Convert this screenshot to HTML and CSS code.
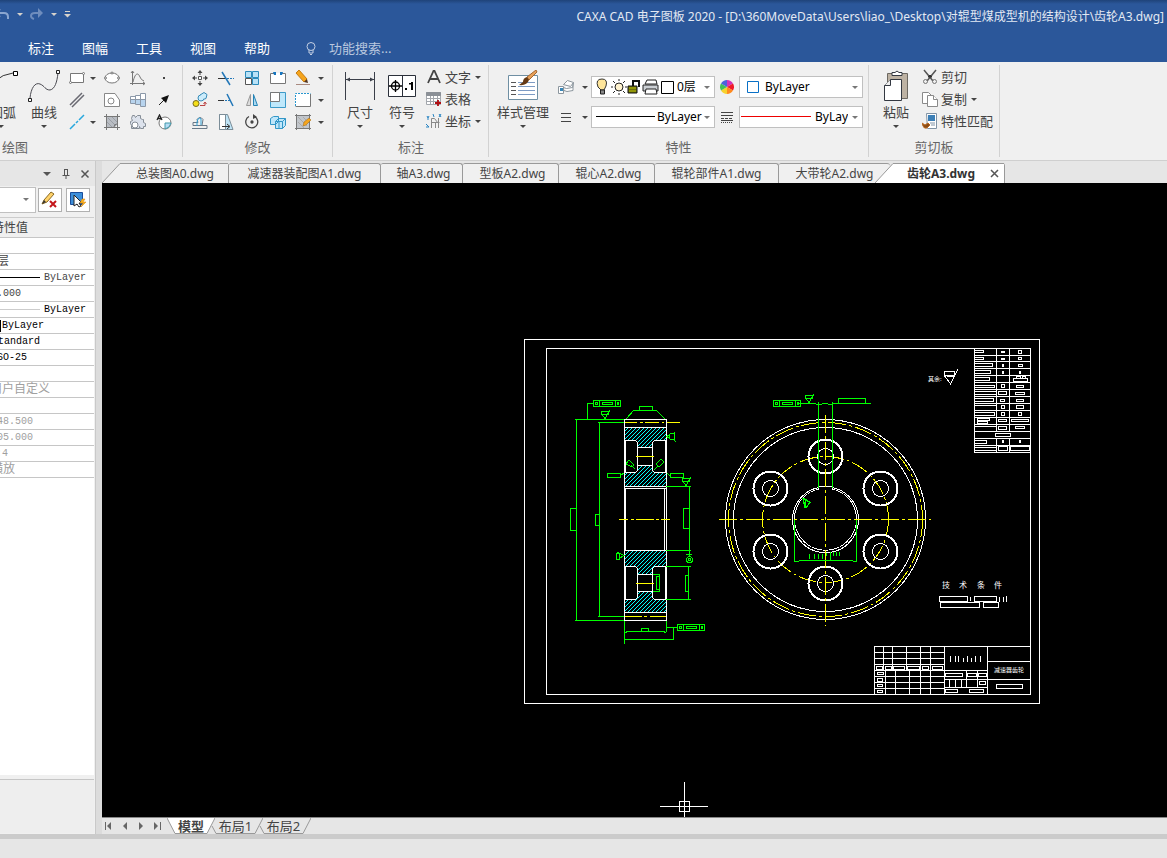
FILE: index.html
```html
<!DOCTYPE html>
<html lang="zh-CN">
<head>
<meta charset="utf-8">
<title>CAXA CAD 电子图板 2020</title>
<link rel="stylesheet" href="styles.css">
</head>
<body>
<div class="app">
<header class="header">
  <div class="titlebar">
    <div class="quick">
      <button class="quick-btn" aria-label="撤销"><svg width="10" height="12"><path d="M-3 5H4Q8 5 8 9V11" fill="none" stroke="#8ba6d0" stroke-width="2"/><path d="M0 1L-4 5L0 9" fill="none" stroke="#8ba6d0" stroke-width="2"/></svg></button>
      <button class="quick-btn" aria-label="撤销列表"><i class="caret caret--light"></i></button>
      <button class="quick-btn" aria-label="重做"><svg width="14" height="12"><path d="M12 5H5Q1 5 1 8Q1 10 4 11" fill="none" stroke="#6f8dbd" stroke-width="2"/><path d="M8 0V10L13 5Z" fill="#6f8dbd"/></svg></button>
      <button class="quick-btn" aria-label="重做列表"><i class="caret caret--light"></i></button>
      <button class="quick-btn" aria-label="自定义"><svg width="7" height="8"><path d="M1 1.500H6" stroke="#d6d2cc"/><path d="M0 4H7L3.500 7.500Z" fill="#d6d2cc"/></svg></button>
    </div>
    <h1 class="title">CAXA CAD 电子图板 2020 - [D:\360MoveData\Users\liao_\Desktop\对辊型煤成型机的结构设计\齿轮A3.dwg]</h1>
  </div>
  <nav class="menu">
    <button>标注</button><button>图幅</button><button>工具</button><button>视图</button><button>帮助</button>
    <label class="search"><svg width="10" height="13" fill="none" stroke="#c3cfe3"><circle cx="5" cy="4.500" r="4"/><path d="M3 8V11H7V8M4 12.500H6"/></svg><input type="text" placeholder="功能搜索..." aria-label="功能搜索"></label>
  </nav>
</header>

<div class="ribbon">
  <section class="group group--draw">
    <div class="group-body">
      <button class="big big--arc"><svg width="32" height="32" viewBox="0 0 32 32" fill="none" stroke="#333"><path d="M2 27Q5 6 27 3"/><path d="M27.500 1.500h4v4h-4z" stroke="#000" fill="#fff"/></svg><span>圆弧</span><i class="caret"></i></button>
      <button class="big big--curve"><svg width="32" height="32" viewBox="0 0 32 32" fill="none" stroke="#4b4b52"><path d="M2 28C3 18 7 12 12 14C17 16 17 20 22 20C27 19 29 12 30 3"/><path d="M28.500 0.500h3v3h-3zM0.500 28.500h3v3h-3z" fill="#fff" stroke="#222"/></svg><span>曲线</span><i class="caret"></i></button>
      <div class="grid grid--draw">
        <div class="split"><button aria-label="矩形"><svg width="16" height="16" fill="#fff" stroke="#777"><path d="M1.500 3.500h13v9h-13z"/><circle cx="1.500" cy="12.500" r="1"/><circle cx="14.500" cy="3.500" r="1"/></svg></button><button class="drop" aria-label="矩形选项"><i class="caret"></i></button></div>
        <button aria-label="椭圆"><svg width="16" height="16" fill="#fff" stroke="#777"><ellipse cx="8" cy="8" rx="7" ry="5"/><circle cx="8" cy="3" r="1"/><circle cx="1.500" cy="8" r="1"/><circle cx="14.500" cy="8" r="1"/></svg></button>
        <button aria-label="公式曲线"><svg width="16" height="16" fill="none" stroke="#777"><path d="M2.500 1V15M0 13.500H15M1 3L2.500 1L4 3M13 12L15 13.500L13 15M3 12C5 3 8 2 10 7Q11 10 14 11"/></svg></button>
        <button aria-label="点"><svg width="16" height="16"><path d="M7 7h2v2H7z" fill="#444"/></svg></button>
        <button class="solo" aria-label="平行线"><svg width="16" height="16" stroke="#6a6a72" stroke-width="1.500"><path d="M1 13L13 1M3 15L15 3"/></svg></button>
        <button aria-label="孔"><svg width="16" height="16" fill="#fff" stroke="#888"><path d="M.5 1.500H11L15.500 8V14.500H.5z"/><circle cx="7" cy="9" r="3"/></svg></button>
        <button aria-label="轴"><svg width="16" height="16" fill="#fff" stroke="#8b98a8"><path d="M.5 4.500H5.500V3.500H10.500V1.500H15.500V14.500H10.500V12.500H5.500V11.500H.5z"/><path d="M1 8H15V14H11V12H6V11H1z" fill="#b8d4ee" stroke="none"/><path d="M5.500 4V12M10.500 2V14M0 7.500H16"/></svg></button>
        <button aria-label="箭头"><svg width="16" height="16"><path d="M3 13L8 8" stroke="#222"/><path d="M13 3L10 11L5 6Z" fill="#111"/></svg></button>
        <div class="split"><button aria-label="中心线"><svg width="16" height="16" stroke="#28a7dd" stroke-width="1.500"><path d="M1 15L6 10M7 9L9 7M10 6L15 1"/></svg></button><button class="drop" aria-label="中心线选项"><i class="caret"></i></button></div>
        <button aria-label="填充"><svg width="16" height="16"><path d="M2 2h12v8l-4 4H2z" fill="#b9bdc3"/><path d="M4 4l8 8M8 3l5 5M3 8l5 5" stroke="#9a9ea5"/><path d="M0 2.500H16M2.500 0V16M13.500 0V16M0 13.500H16M13 10q-3 0-3 3" fill="none" stroke="#777"/></svg></button>
        <button aria-label="齿轮"><svg width="16" height="16" fill="#dce2ec" stroke="#858d96"><path d="M2.500 1.500h2l1 2 2-2h3v3l2 1h1v3l2 1v3h-2v2h-3l-1-2v2h-8v-3l-1-2v-2l2-1-1-2z"/><circle cx="5" cy="11" r="3" fill="#fff"/></svg></button>
        <button aria-label="局部放大"><svg width="16" height="16" fill="#fff" stroke="#777"><circle cx="9" cy="9" r="6"/><path d="M9 9h6q-1 5-6 6z" fill="#b5dcf5" stroke="#49a"/><path d="M1 6L3.500 1L6 6M2 4.500h3" fill="none" stroke="#222" stroke-width="1.300"/></svg></button>
      </div>
    </div>
    <h2 class="group-label">绘图</h2>
  </section>

  <section class="group group--modify">
    <div class="group-body">
      <div class="grid grid--modify">
        <button aria-label="平移"><svg width="16" height="16"><path d="M6.500 6.500h3v3h-3z" fill="#fff" stroke="#555"/><path d="M8 0l2.500 3h-2v2h-1V3h-2zM8 16l2.500-3h-2v-2h-1v2h-2zM0 8l3-2.500v2h2v1H3v2zM16 8l-3-2.500v2h-2v1h2v2z" fill="#444"/></svg></button>
        <button aria-label="裁剪"><svg width="16" height="16" fill="none" stroke="#2277b8"><path d="M0 8.500H8" stroke="#333"/><path d="M9 8.500H16" stroke-dasharray="2 1"/><path d="M4 2L12 15" stroke-width="1.500"/></svg></button>
        <button aria-label="阵列"><svg width="16" height="16" fill="#b9e2f7" stroke="#2b8bbb"><path d="M1.500 1.500h6v6h-6zM8.500 1.500h6v6h-6zM8.500 8.500h6v6h-6z"/><path d="M1.500 8.500h6v6h-6z" fill="#fff" stroke="#555"/></svg></button>
        <button aria-label="打断"><svg width="16" height="16"><path d="M0 3h16v11H0z" fill="#fff"/><path d="M4 3.500H.5v10h15v-10H12" fill="none" stroke="#777"/><path d="M3 2h3v3H4zM13 2h-3v3h2z" fill="#1676c0"/></svg></button>
        <div class="split"><button aria-label="删除"><svg width="16" height="16"><path d="M1 3L4 0L12 9L9 12Z" fill="#f5a51d" stroke="#c57c13"/><path d="M9 12L12 9L13 13Z" fill="#523421"/><path d="M1 14.500h14" stroke="#a98a80"/></svg></button><button class="drop" aria-label="删除选项"><i class="caret"></i></button></div>
        <button aria-label="平移复制"><svg width="16" height="16" fill="#ccecfb" stroke="#368bb7"><circle cx="9" cy="6" r="3"/><path d="M8 3l4-2.500 3 2-1 4-3 1"/><circle cx="4" cy="11.500" r="3" fill="#f5df18" stroke="#776b22"/><path d="M8 13.500h5v-3M11.500 12l1.500-2 1.500 2" fill="none" stroke="#b44"/></svg></button>
        <button aria-label="延伸"><svg width="16" height="16" fill="none" stroke="#2277b8"><path d="M0 8.500H6" stroke="#333"/><path d="M7 8.500H13" stroke-dasharray="2 1"/><path d="M9 2L15 14" stroke-width="1.500"/></svg></button>
        <button aria-label="镜像"><svg width="16" height="16" fill="#ddd" stroke="#999"><path d="M6.500 2.500V13.500H2.500z"/><path d="M9.500 2.500V13.500H13.500z" fill="#aad9f2" stroke="#2483b5"/></svg></button>
        <button aria-label="缩放"><svg width="16" height="16" fill="#bfe8fb" stroke="#3c9ac8"><path d="M.5 .5h15v15H.500z"/><path d="M.5 .5h9v9h-9z" fill="#fff" stroke="#777"/></svg></button>
        <div class="split"><button aria-label="边界"><svg width="16" height="16"><path d="M0 1h16v14H0z" fill="#fff"/><path d="M15.500 2v12.500H.5" fill="none" stroke="#777"/><path d="M.5 14V1.500h15" stroke="#2796cf" stroke-dasharray="2 1" fill="none"/></svg></button><button class="drop" aria-label="边界选项"><i class="caret"></i></button></div>
        <button aria-label="等距线"><svg width="16" height="16" fill="none"><path d="M0 14.500h15v-3h-5l1-6q-3-4-6 0l1 3H1v3h14" stroke="#687988"/><path d="M5 12V8l1-3q2-2 3 0v6" stroke="#32a0d4"/></svg></button>
        <button aria-label="拉伸"><svg width="16" height="16" fill="#bfe4f6" stroke="#7b8d98"><path d="M1.500.500h8L15 15.500H1.500z"/><path d="M1.500.500h6v15h-6z" fill="#fff"/><path d="M4 12.500h7M9 10l3 2.500L9 15" stroke="#333" fill="none"/></svg></button>
        <button aria-label="旋转"><svg width="16" height="16" fill="none" stroke="#444" stroke-width="1.300"><path d="M10.500 2.500A6 6 0 1 1 5 2.500"/><path d="M9 0L13 3L9 5Z" fill="#444" stroke="none"/><circle cx="8" cy="8" r="1" fill="#444"/></svg></button>
        <button aria-label="分解"><svg width="16" height="16" fill="#bfe6fa" stroke="#3397c7"><path d="M.5 4.500l3-2h5v5l-3 3h-5zM5.500 7.500l3-3h7v7l-3 3h-7zM5.500 7.500h7v7M12.500 7.500l3-3M9 8v6"/></svg></button>
        <div class="split"><button aria-label="编辑填充"><svg width="16" height="16"><path d="M2 2h12v12H2z" fill="#c2c6cb"/><path d="M3 3l9 9M3 8l6 6M8 3l6 6" stroke="#aaa"/><path d="M0 1.500h16M0 14.500h16M1.500 0v16M14.500 0v16" stroke="#777"/><path d="M8 12L9 8L14 4L16 6L11 11Z" fill="#f5a51d" stroke="#9d6515" stroke-width=".5"/></svg></button><button class="drop" aria-label="编辑填充选项"><i class="caret"></i></button></div>
      </div>
    </div>
    <h2 class="group-label">修改</h2>
  </section>

  <section class="group group--note">
    <div class="group-body">
      <button class="big big--m"><svg width="32" height="32" viewBox="0 0 32 32" fill="none" stroke="#3b3f49"><path d="M1.500 2v28M30.500 2v28M2 9.500h28"/><path d="M2 9.500l4-2v4zM30 9.500l-4-2v4z" fill="#3b3f49" stroke="none"/></svg><span>尺寸</span><i class="caret"></i></button>
      <button class="big big--m"><svg width="32" height="32" viewBox="0 0 32 32" fill="none" stroke="#2b303a"><path d="M2.500 5.500h27v21h-27zM16.500 6v20" fill="#fff"/><g stroke="#000" stroke-width="1.300"><circle cx="9.500" cy="16" r="4"/><path d="M3 16h13M9.500 10v12"/></g><path d="M19 18h2v2h-2zM25 12h2v8h-2zM23 13h3v1.500h-3z" fill="#000" stroke="none"/></svg><span>符号</span><i class="caret"></i></button>
      <div class="list list--note">
        <div class="split"><button><svg width="16" height="16" fill="none" stroke="#444" stroke-width="1.800"><path d="M2 14L7.500 2h1L14 14M4 10h8"/></svg><span>文字</span></button><button class="drop" aria-label="文字选项"><i class="caret"></i></button></div>
        <button><svg width="16" height="16" fill="#fff" stroke="#a3a7ad"><path d="M.5 1.500h14v12H.500z"/><path d="M1 7.500h13M1 10.500h13M4.500 4v9M7.500 4v9M11.500 4v9"/><path d="M.5 1.500h14v3H.500z" fill="#8b9097" stroke="#8b9097"/><path d="M12 9v6M9 12h6" stroke="#b00d12" stroke-width="1.800"/></svg><span>表格</span></button>
        <div class="split"><button><svg width="16" height="16" fill="none" stroke="#888"><path d="M5.500 15V5.500h3L12 10M5.500 9.500h8M9.500 15V10M12.500 15V5"/><path d="M1 3l1 2 1-2M2 5v2M13 1l2 3M15 1l-2 3M7 1l1 3M0 11l3 3M0 14h3" stroke="#2683c2"/></svg><span>坐标</span></button><button class="drop" aria-label="坐标选项"><i class="caret"></i></button></div>
      </div>
    </div>
    <h2 class="group-label">标注</h2>
  </section>

  <section class="group group--props">
    <div class="group-body">
      <button class="big big--style"><svg width="32" height="32" viewBox="0 0 32 32" fill="#fff" stroke="#6f8fa3"><path d="M1.500 5.500h29v24h-29z"/><path d="M4 12.500h5M4 16.500h5M4 20.500h5M4 24.500h5" stroke="#555"/><path d="M11 12.500h17M11 16.500h17M11 20.500h17M11 24.500h17" stroke="#7d9bc4"/><path d="M29 0L20 7L22 10L30 2Z" fill="#e8a15a" stroke="#a5672f"/><path d="M20 7Q16 8 16 12L12 15Q20 16 22 10Z" fill="#653913" stroke="none"/></svg><span>样式管理</span><i class="caret"></i></button>
      <div class="props">
        <div class="split"><button aria-label="图层"><svg width="16" height="16" fill="#fff" stroke="#8c969e"><path d="M5.500 5.500l4-4 6 2-3 4zM5.500 8.500l3 1 6-1 1-5M6 11.500l3 1 6-1V4"/><path d="M.5 7.500h5v7h-5z"/><path d="M2 9h3v3H2z" fill="#3987b8" stroke="none"/></svg></button><button class="drop" aria-label="图层选项"><i class="caret"></i></button></div>
        <div class="combo"><svg width="82" height="18" viewBox="0 0 82 18"><path d="M3 9Q0 1 7 1Q13 1 11 8L9 12H6Z" fill="#ffe69b" stroke="#333"/><path d="M5.500 12h4v4h-4z" fill="#888" stroke="#222"/><circle cx="24" cy="9" r="4" fill="#fff3cf" stroke="#222"/><path d="M24 1v2M24 15v2M16 9h2M30 9h2M18 3l2 2M28 13l2 2M30 3l-2 2M20 13l-2 2" stroke="#222"/><path d="M33 8h9v7h-9z" fill="#6d7010" stroke="#111"/><path d="M38 8V3h6v6" fill="none" stroke="#111" stroke-width="2"/><path d="M34 10h7M34 13h7" stroke="#b8bd00"/><path d="M50 6l2-4h9l1 4z" fill="#fff" stroke="#222"/><path d="M48 7h15v6H48z" fill="#ccd0d4" stroke="#222"/><path d="M51 11h10l1 5H50z" fill="#fff" stroke="#222"/><path d="M66.500 3.500h12v12h-12z" fill="#fff" stroke="#000"/></svg><select aria-label="当前图层"><option>0层</option></select><i class="caret caret--combo"></i></div>
        <svg class="prop-icon" width="14" height="14" viewBox="0 0 14 14"><path d="M7 7V0A7 7 0 0 1 13 3.500Z" fill="#cf34ba"/><path d="M7 7L13 3.500A7 7 0 0 1 13 10.500Z" fill="#f01b28"/><path d="M7 7L13 10.500A7 7 0 0 1 7 14Z" fill="#ff8a1f"/><path d="M7 7V14A7 7 0 0 1 1 10.500Z" fill="#f8d22c"/><path d="M7 7L1 10.500A7 7 0 0 1 1 3.500Z" fill="#42bf58"/><path d="M7 7L1 3.500A7 7 0 0 1 7 0Z" fill="#4a63dc"/></svg>
        <div class="combo combo--color"><svg width="14" height="14"><path d="M1.500 1.500h11v11h-11z" fill="#fff" stroke="#0870c6"/></svg><select aria-label="颜色"><option>ByLayer</option></select><i class="caret caret--combo"></i></div>
        <div class="split"><button aria-label="线宽"><svg width="16" height="16" stroke="#444"><path d="M3 4.500h10M3 8.500h10M3 12.500h10"/></svg></button><button class="drop" aria-label="线宽选项"><i class="caret"></i></button></div>
        <div class="combo combo--line"><svg width="59" height="4"><path d="M0 1.500h59" stroke="#000"/></svg><select aria-label="线型"><option>ByLayer</option></select><i class="caret caret--combo"></i></div>
        <svg class="prop-icon" width="14" height="14" stroke="#444"><path d="M1 2.500h12M1 5.500h12M1 10.500h12"/><path d="M1 8.500h12" stroke-dasharray="3 1"/><path d="M1 12.500h12" stroke-dasharray="1 1"/></svg>
        <div class="combo combo--weight"><svg width="70" height="4"><path d="M0 1.500h70" stroke="#e00"/></svg><select aria-label="线宽值"><option>ByLayer</option></select><i class="caret caret--combo"></i></div>
      </div>
    </div>
    <h2 class="group-label">特性</h2>
  </section>

  <section class="group group--clip">
    <div class="group-body">
      <button class="big big--paste"><svg width="32" height="32" viewBox="0 0 32 32" fill="#bdb2a3" stroke="#333841"><path d="M7.500 3.500h20v25h-20z" stroke="#6d6962"/><path d="M12 5.500v-3h3q2-3 4 0h3v3z" fill="#fff"/><path d="M10.500 9.500h11v21h-17v-15z" fill="#fff"/><path d="M10.500 9.500v6h-6" fill="#eee"/></svg><span>粘贴</span><i class="caret"></i></button>
      <div class="list list--clip">
        <button><svg width="16" height="16" fill="none" stroke="#777"><path d="M2 1l9 11M14 1L5 12" stroke="#555" stroke-width="1.500"/><path d="M6 8l4 0-2-2z" fill="#333" stroke="#333"/><circle cx="3.500" cy="12.500" r="2"/><circle cx="12.500" cy="12.500" r="2"/></svg><span>剪切</span></button>
        <div class="split"><button><svg width="16" height="16" fill="#fff" stroke="#8a8a8a"><path d="M.5 1.500h6l3 3v8h-9z"/><path d="M5.500 4.500h6l4 4v7h-10z"/><path d="M11.500 4.500v4h4"/></svg><span>复制</span></button><button class="drop" aria-label="复制选项"><i class="caret"></i></button></div>
        <button><svg width="16" height="16" fill="#fff" stroke="#8093a5"><path d="M4.500.5h10v15h-9z"/><path d="M6 2h7v6H6z" fill="#3c7fb6" stroke="none"/><path d="M8 10h5M9 12h4"/><path d="M0 10l3 2l3-2l2 2l-3 3q-3 1-4-2z" fill="#8b4c16" stroke="#b96a22"/></svg><span>特性匹配</span></button>
      </div>
    </div>
    <h2 class="group-label">剪切板</h2>
  </section>
</div>

<div class="workspace">
  <aside class="panel">
    <div class="panel-head">
      <button aria-label="菜单"><svg width="10" height="10"><path d="M1 3h8L5 7z" fill="#555"/></svg></button>
      <button aria-label="固定"><svg width="10" height="10" fill="none" stroke="#555"><path d="M3.500 1v5M6.500 1v5M3 .5h4M1.500 6.500h7M5 6v4"/></svg></button>
      <button aria-label="关闭"><svg width="10" height="10" stroke="#555" stroke-width="1.500"><path d="M1.500 1.500l7 7M8.500 1.500l-7 7"/></svg></button>
    </div>
    <div class="panel-tools">
      <div class="combo combo--panel"><select aria-label="选择对象"><option></option></select><i class="caret caret--combo"></i></div>
      <button class="tool" aria-label="清除选择"><svg width="18" height="18"><path d="M1 13L3 9L10 1L13 3L6 11Z" fill="#ffd26a" stroke="#8a6a22"/><path d="M1 13L3 9L5 11Z" fill="#333"/><path d="M9 10l6 6M15 10l-6 6" stroke="#c4161b" stroke-width="2"/></svg></button>
      <button class="tool" aria-label="快速选择"><svg width="18" height="18"><path d="M1.500 1.500h12v12h-12z" fill="#3d8fd9" stroke="#1a4d9b"/><path d="M5 4v11l3-2l2 3l2-1l-2-3h3z" fill="#fff" stroke="#222"/><path d="M13 8l-2 4h3l-2 4l5-5h-3l2-3z" fill="#ffb31a" stroke="#d08313" stroke-width=".5"/></svg></button>
    </div>
    <div class="props-wrap">
    <table class="sheet">
      <thead><tr><th><div class="cut cut--head">特性值</div></th></tr></thead>
      <tbody>
        <tr><td></td></tr>
        <tr><td><div class="cut cut--layer">0层</div></td></tr>
        <tr><td><div class="line-cell"><svg width="40" height="3"><path d="M0 1.500h40" stroke="#000"/></svg>ByLayer</div></td></tr>
        <tr><td><div class="cut cut--num">1.000</div></td></tr>
        <tr><td><div class="line-cell line-cell--dark"><svg width="40" height="3"><path d="M0 1.500h40" stroke="#ccc"/></svg>ByLayer</div></td></tr>
        <tr><td><div class="cut cut--swatch dark"><span class="swatch"></span>ByLayer</div></td></tr>
        <tr><td><div class="cut cut--std dark">Standard</div></td></tr>
        <tr><td><div class="cut cut--iso dark">ISO-25</div></td></tr>
        <tr><td></td></tr>
        <tr><td><div class="cut cut--user muted">用户自定义</div></td></tr>
        <tr><td></td></tr>
        <tr><td><div class="cut cut--dim muted">148.500</div></td></tr>
        <tr><td><div class="cut cut--dim muted">105.000</div></td></tr>
        <tr><td><div class="cut cut--scale muted">1:4</div></td></tr>
        <tr><td><div class="cut cut--orient muted">横放</div></td></tr>
      </tbody>
    </table>
    </div>
    <div class="panel-note"></div>
  </aside>

  <main class="main">
    <div class="tabs">
      <button class="tab tab--first"><svg class="slant" width="20" height="20"><path d="M0 20L18 .500H20V20Z" fill="#f0f0f0"/><path d="M0 20L18 .500H20" fill="none" stroke="#999"/></svg><span>总装图A0.dwg</span></button>
      <button class="tab tab--xl"><span>减速器装配图A1.dwg</span></button>
      <button class="tab tab--s"><span>轴A3.dwg</span></button>
      <button class="tab tab--m"><span>型板A2.dwg</span></button>
      <button class="tab tab--m"><span>辊心A2.dwg</span></button>
      <button class="tab tab--l"><span>辊轮部件A1.dwg</span></button>
      <button class="tab tab--last"><span>大带轮A2.dwg</span></button>
      <button class="tab tab--active"><svg class="slant" width="20" height="20"><path d="M0 20L18 .500H20V20Z" fill="#fff"/><path d="M0 20L18 .500H20" fill="none" stroke="#999"/></svg><span>齿轮A3.dwg</span><svg class="close" width="9" height="9" stroke="#555" stroke-width="1.500"><path d="M1 1l7 7M8 1l-7 7"/></svg></button>
    </div>

    <div class="canvas">
    <svg class="drawing" viewBox="102 183 1065 634" fill="none" stroke="#fff" shape-rendering="crispEdges">
      <defs>
        <clipPath id="cut-area"><path d="M625 428h41v12h-11l-2 2v5h-15v-5l-2-2h-11zM625 473h10l3-2v-5h14v5l2 2h12v13h-41zM625 551h41v15h-11l-2 2v6h-15v-6l-2-2h-11zM625 600h10l3-2v-6h14v6l2 2h12v12h-41z"/></clipPath>
        <g id="hole"><circle r="17" stroke="#fff" stroke-width="2"/><circle r="8"/></g>
        <g id="tol"><path d="M.5.500h27v6H.500zM6.500 1v5M22.500 1v5M9.500 2.500h10v2h-10zM2.500 2.500h2v2h-2zM24.500 2.500h1v2h-1z"/></g>
        <g id="rough"><path d="M-4-3H4M-4-3V-6H3V-3M-3-3L0 2L5-7"/></g>
      </defs>
      <!-- sheet frame -->
      <path d="M524.500 339.500h515v364h-515zM546.500 348.500h484v346h-484z"/>

      <!-- section view -->
      <g clip-path="url(#cut-area)" stroke="#00ffff">
        <path id="lines" d="M624 432l8-8M624 436l12-12M624 440l16-16M624 444l20-20M624 448l24-24M624 452l28-28M624 456l32-32M624 460l36-36M624 464l40-40M624 468l44-44M624 472l44-44M624 476l44-44M624 480l44-44M624 484l44-44M624 488l44-44M624 492l44-44M624 496l44-44M624 500l44-44M624 504l44-44M624 508l44-44M624 512l44-44M624 516l44-44M624 520l44-44M624 524l44-44M624 528l44-44"/>
        <use href="#lines" y="124"/>
      </g>
      <g>
        <path d="M624.500 427.500h42M624.500 440.500h11l2 2v5h15v-5l2-2h12M624.500 472.500h11l2-2v-5h15v5l2 2h12M624.500 486.500h42M624.500 550.500h42M624.500 566.500h11l2 2v6h15v-6l2-2h12M624.500 599.500h11l2-2v-6h15v6l2 2h12M624.500 612.500h42"/>
        <path d="M624.500 419.500h42v201h-42zM637.500 447v19M652.500 447v19M637.500 574v18M652.500 574v18M624 488.500h42M664.500 489v61M625.500 440v32M665.500 440v32M625.500 489v61M625.500 566v33M665.500 566v33"/>
        <path stroke="#ff0" d="M625 422.500h12M640 422.500h3M645 422.500h14M662 422.500h2M667 422.500h13M636 456.500h18M636 583.500h18M619 519.500h9M631 519.500h3M636 519.500h18M656 519.500h3M661 519.500h9M625 616.500h17M644 616.500h3M650 616.500h16"/>
      </g>
      <g stroke="#0f0">
        <use href="#tol" x="593" y="400"/><use href="#tol" x="677" y="624"/><use href="#tol" x="773" y="400"/>
        <use href="#rough" x="605" y="417"/><use href="#rough" x="686" y="484"/><use href="#rough" x="809" y="401"/>
        <path d="M593 403.500h-5.500v16M575 419.500h49M598 422.500h26M576.500 420v201M599.500 423v194M575 620.500h49M598 616.500h26M570.500 508.500h6v22h-6zM595.500 514.500h4v11h-4z"/>
        <path d="M626 419l7.500-8.500h23l8.500 8.500M639.500 406.500h13v4h-13zM607.500 473.500h13v4h-13zM620 476l4-3M670.500 473.500h13v4h-13zM667 473l3 3"/>
        <path d="M667 436.500l4-3h3.500v6h-3.500zM674 432v8l2 2M669 434v5M626 464l3-4 5 5-2 2zM631 465l4 4M656 464l5-5 3 3-5 5zM658 466l-4 4"/>
        <path d="M616.500 553.500h3v6h-3zM617 552l7 3.500-5 3M666 486.500h25M689.500 487v63M666 550.500h25M683.500 508.500h6v20h-6zM686 554.500h6M689 551v5M666 566.500h25M688.500 566v33M666 599.500h25M685.500 575.500h3v16h-3zM653 574.500h7M653 591.500h7M659.500 574v17M656.500 576.500h3v13h-3z"/>
        <circle cx="689.500" cy="559.500" r="3"/><circle cx="689.500" cy="559.500" r="1"/>
        <path d="M624.500 621v23M666.500 621v11M625 632.500l3-1h35l3 1M641.500 628.500h7v3h-7zM624 639.500h49.500v-12M666 627.500h11"/>
      </g>

      <!-- front view -->
      <g>
        <circle cx="825.500" cy="519.500" r="100"/><circle cx="825.500" cy="519.500" r="92"/>
        <path d="M818.500 486.500h14M818.500 487v2A31 31 0 1 0 832.500 489v-2"/><path d="M818.500 487.500A33 33 0 1 0 832.500 487.500"/>
        <g stroke="#ff0"><circle cx="825.500" cy="519.500" r="97" stroke-dasharray="18 3 3 3"/><circle cx="825.500" cy="519.500" r="63" stroke-dasharray="18 3 3 3"/></g>
        <use href="#hole" x="825.500" y="456.500"/><use href="#hole" x="880.500" y="488.500"/><use href="#hole" x="880.500" y="551.500"/><use href="#hole" x="825.500" y="583.500"/><use href="#hole" x="770.500" y="551.500"/><use href="#hole" x="770.500" y="488.500"/>
        <path stroke="#ff0" stroke-dasharray="18 3 3 3" d="M719 519.500h212M825.500 415v211"/>
        <g stroke="#0f0"><path d="M818.500 402v86M832.500 402v86M799 403.500h17M816 404.500h6M822 403.500h6M828 404.500h5M833 403.500h38M838.500 403v-4.500h27v5M794.500 520v41.500h4l1-1h53l1 1h3V520"/><path d="M809.500 554v5M814.500 554v5M818.500 554v5M822.500 554v5M826.500 553v3M830.500 552v8M833.500 552v4M836.500 552v4M839.500 552v4M803 498l7 4-4 6-3-9 8 4M803 499l2 9M806 501l-1 7"/></g>
      </g>

      <!-- surface finish note -->
      <text class="cad cad--xs" x="928" y="381">其余:</text>
      <path d="M944.500 371.500h10v4h-10zM944 375l6.500 9L958 369M947 376.500h7"/>

      <!-- parameter table -->
      <path d="M974.500 348v104.500h56M996.500 348v83M1009.500 348v83M996.500 438v14M1009.500 438v14M974 355.500h56M974 361.500h56M974 368.500h56M974 375.500h56M974 382.500h56M974 389.500h56M974 396.500h56M974 403.500h56M974 410.500h56M974 417.500h56M974 424.500h56M974 431.500h56M974 438.500h56M974 445.500h56"/>
      <path d="M975 350.500h8.500v2H975M975 357.500h8.500v2H975M975 363.500h17.500v3H975M975 370.500h15.500v3H975M975 377.500h14.500v3H975M975 385.500h19.500v2H975M975 391.500h21M975 394.500h21M975 398.500h18.500v3H975M975 405.500h21M975 412.500h19.500v3H975M977.500 418.500h12v2h-12zM977.500 421.500h10v2h-10zM975 426.500h21M975 440.500h11.500v3H975M975 447.500h21M975 450.500h21M1001.500 384.500h3v3h-3zM998.500 391.500h8v3h-8zM1000.500 399.500h4v2h-4zM1001.500 405.500h3v3h-3zM1001.500 412.500h3v3h-3zM998.500 419.500h8v2h-8zM998.500 426.500h8v3h-8zM998.500 446.500h9v4h-9z"/>
      <path stroke-width="2" d="M1001 352h4M1001 359h4M1003 364v3M1003 371v3M1003 440v3M1020 371v3M1020 440v3"/>
      <path d="M1018.500 350.500h3v3h-3zM1018.500 357.500h3v2h-3zM1018.500 364.500h4v2h-4zM1013.500 378.500h14v3h-14zM1016.500 376.500h4v2h-4zM1022.500 376.500h3v2h-3zM1016.500 385.500h7v2h-7zM1015.500 392.500h9v2h-9zM1016.500 399.500h7v2h-7zM1016.500 405.500h7v3h-7zM1018.500 412.500h3v3h-3zM1011.500 419.500h17v2h-17zM1015.500 426.500h9v2h-9zM995.500 433.500h15v3h-15zM1010.500 446.500h19v4h-19z"/>

      <!-- technical notes -->
      <text class="cad cad--s" y="588" x="942 959 977 994">技术条件</text>
      <path d="M939.500 596.500h28v5h-28zM970.500 597v4M974.500 596.500h22v5h-22zM999.500 597v5M1003.500 597v5M1006.500 596v6M940.500 602.500h39v5h-39zM983.500 602.500h15v5h-15z"/>

      <!-- title block -->
      <path d="M1030 646.500H874.500V694M944.500 647v47M987.500 647v47M987 661.500h43M987 679.500h43M874 652.500h70M874 658.500h70M874 664.500h70M874 670.500h113M874 676.500h70M874 682.500h70M874 688.500h70M883.500 647v24M892.500 647v24M906.500 647v24M920.500 647v24M930.500 647v24M885.500 671v23M895.500 671v23M909.500 671v23M920.500 671v23M930.500 671v23"/>
      <path d="M876.500 666.500h6v3h-6zM885.500 666.500h6v3h-6zM893.500 666.500h11v3h-11zM907.500 666.500h12v3h-12zM922.500 666.500h6v3h-6zM932.500 666.500h10v3h-10zM877.500 672.500h6v2h-6zM877.500 678.500h5v3h-5zM877.500 684.500h5v2h-5zM877.500 690.500h5v2h-5z"/>
      <path d="M950.500 656v6M955.500 656v6M958.500 656v6M963.500 658v4M967.500 656v6M971.500 658v4M975.500 656v6M980.500 656v6M945.500 673.500h17v3h-17zM967.500 673.500h9v3h-9zM978.500 673.500h8v3h-8zM944 679.500h43M944 687.500h43M949.500 680v7M955.500 680v7M961.500 680v7M966.500 671v16M977.500 671v16M979.500 681.500h6v3h-6zM945.500 689.500h12v3h-12zM969.500 689.500h14v3h-14zM996.500 684.500h26v4h-26z"/>
      <text class="cad cad--xs" x="994" y="672">减速器齿轮</text>

      <!-- cursor -->
      <path d="M660 806.500h48M684.500 782v35M679.500 801.500h10v10h-10z"/>
    </svg>
    </div>

    <div class="layouts">
      <div class="pager">
        <button aria-label="首页"><svg width="8" height="8" fill="#666"><path d="M0 0h1v8H0zM6 0v8L2 4z"/></svg></button>
        <button aria-label="上一页"><svg width="8" height="8" fill="#666"><path d="M6 0v8L2 4z"/></svg></button>
        <button aria-label="下一页"><svg width="8" height="8" fill="#666"><path d="M2 0v8l4-4z"/></svg></button>
        <button aria-label="末页"><svg width="8" height="8" fill="#666"><path d="M7 0h1v8H7zM1 0v8l4-4z"/></svg></button>
      </div>
      <button class="sheet-tab sheet-tab--active"><svg viewBox="0 0 48 16" width="48" height="16"><path d="M0 0L8 15.500H40L48 0" fill="#fff" stroke="#999"/></svg><span>模型</span></button>
      <button class="sheet-tab"><svg viewBox="0 0 55 16" width="55" height="16"><path d="M4 8L8 15.500H47L55 0" fill="none" stroke="#999"/></svg><span>布局1</span></button>
      <button class="sheet-tab"><svg viewBox="0 0 55 16" width="55" height="16"><path d="M4 8L8 15.500H47L55 0" fill="none" stroke="#999"/></svg><span>布局2</span></button>
    </div>
  </main>
</div>
<footer class="status"></footer>
</div>
</body>
</html>
```
FILE: styles.css
```css
* { box-sizing: border-box; }
body { margin: 0; font: 13px/16px "Noto Sans", "Noto Sans CJK SC", sans-serif; color: #444; }
button, input, select { font: inherit; color: inherit; border: 0; padding: 0; margin: 0; background: none; }
button { display: flex; align-items: center; justify-content: center; white-space: nowrap; }
h1, h2 { margin: 0; font-weight: 400; font-size: 13px; }
svg { display: block; flex: none; }

.app { display: flex; flex-direction: column; height: 100vh; overflow: hidden; background: #e6e6e6; }

.caret { flex: none; width: 0; height: 0; border: 3px solid transparent; border-top-color: #444; border-bottom: 0; }
.caret--light { border-top-color: #d6d2cc; }
.caret--combo { border-top-color: #777; margin-right: 4px; }

/* header */
.header { background: linear-gradient(#1f4379, #2b579a 4px); color: #fff; height: 62px; flex: none; }
.titlebar { display: flex; justify-content: space-between; align-items: center; height: 34px; padding-right: 3px; }
.title { font-size: 12px; color: #e3e9f3; white-space: nowrap; }
.quick { display: flex; align-items: center; gap: 7px; padding-bottom: 6px; }
.menu { display: flex; align-items: center; height: 28px; padding-left: 14px; }
.menu button { width: 54px; height: 28px; }
.search { display: flex; align-items: center; gap: 13px; padding-left: 22px; }
.search input { width: 100px; color: #b9c7df; outline: 0; }
.search input::placeholder { color: #b9c7df; opacity: 1; }

/* ribbon */
.ribbon { display: flex; height: 99px; flex: none; padding: 3px 0; background: #f0f0f0; border-bottom: 1px solid #cfcfcf; }
.group { display: flex; flex-direction: column; justify-content: space-between; border-right: 1px solid #d2d2d2; }
.group-body { display: flex; height: 70px; }
.group-label { text-align: center; color: #666; height: 18px; line-height: 16px; }
.group--draw { width: 183px; }
.group--draw .group-label { width: 28px; text-align: right; }
.group--modify { width: 150px; padding: 0 4px; }
.group--note { width: 156px; padding: 0 5px 0 6px; }
.group--props { width: 380px; padding: 0 5px; }
.group--clip { width: 131px; padding: 0 10px; }
.big { flex: none; flex-direction: column; justify-content: flex-start; padding-top: 5px; }
.big span { line-height: 20px; }
.big .caret { margin-top: 3px; }
.big--arc { width: 26px; margin-left: -10px; margin-right: 12px; align-items: flex-end; }
.big--arc svg { margin-right: -2px; }
.big--arc .caret { margin-right: 12px; }
.big--curve { width: 32px; margin-right: 6px; }
.big--m { width: 42px; }
.big--style { width: 58px; }
.big--paste { width: 34px; margin-right: 9px; }
.grid { display: grid; grid-auto-rows: 22px; padding-top: 2px; }
.grid--draw { grid-template-columns: 33px 26px 26px 26px; }
.grid--modify { grid-template-columns: 26px 26px 26px 26px 36px; }
.solo { padding-right: 12px; }
.split { display: flex; align-items: center; }
.split > button:first-child { flex: 1; height: 100%; }
.drop { width: 12px; height: 100%; }
.list { display: grid; grid-auto-rows: 22px; padding-top: 1px; justify-items: start; }
.list button { gap: 3px; }
.list .drop { width: 14px; }
.list--note { padding-left: 3px; }
.props { display: grid; grid-template-columns: 39px 124px 24px 124px; grid-auto-rows: 22px; row-gap: 8px; padding-top: 11px; align-items: center; }
.prop-icon { justify-self: center; }
.combo { display: flex; align-items: center; height: 22px; min-width: 0; background: #fff; border: 1px solid #c0c0c0; color: #000; overflow: hidden; padding-left: 3px; }
.combo select { appearance: none; flex: 1; min-width: 0; width: 0; font-size: 12px; outline: 0; overflow: hidden; }
.combo--color { padding-left: 6px; gap: 5px; }
.combo--line { padding-left: 4px; gap: 2px; }
.combo--line .caret { margin-left: -2px; }
.combo--weight { padding-left: 1px; gap: 4px; }

/* workspace */
.workspace { display: flex; flex: 1; min-height: 0; }
.panel { display: flex; flex-direction: column; width: 96px; flex: none; border-right: 1px solid #c9c9c9; background: #f0f0f0; overflow: hidden; }
.panel-head { display: flex; justify-content: flex-end; align-items: center; gap: 9px; height: 25px; padding-right: 5px; background: #e6e6e6; }
.panel-tools { display: flex; align-items: center; gap: 4px; height: 27px; }
.combo--panel { width: 36px; height: 26px; border-left: 0; margin-right: -2px; }
.combo--panel .caret { margin-right: 6px; }
.tool { width: 24px; height: 24px; background: #fff; border: 1px solid #b0b0b0; }
.props-wrap { flex: 1; margin: 4px 1px 0 0; background: #fff; border-top: 1px solid #ccc; }
.sheet { width: 100%; border-collapse: collapse; table-layout: fixed; font: 10px/15px "Liberation Mono", "Noto Sans CJK SC", monospace; }
.sheet th, .sheet td { padding: 0; height: 16px; border-bottom: 1px solid #c6c6c6; font-weight: 400; text-align: left; }
.sheet th { height: 19px; background: #f0f0f0; }
.cut { display: flex; justify-content: flex-end; height: 15px; overflow: hidden; white-space: nowrap; }
.cut--head { width: 28px; height: 18px; line-height: 22px; font-size: 12px; }
.cut--layer { width: 9px; font-size: 12px; line-height: 16px; }
.cut--num { width: 21px; }
.cut--swatch { width: 44px; }
.cut--std { width: 40px; }
.cut--iso { width: 27px; }
.cut--user { width: 50px; font-size: 12px; line-height: 16px; }
.cut--dim { width: 33px; }
.cut--scale { width: 8px; }
.cut--orient { width: 15px; font-size: 12px; line-height: 16px; }
.swatch { width: 12px; height: 12px; border: 1px solid #000; flex: none; margin: 2px 1px; }
.line-cell { display: flex; align-items: center; gap: 4px; height: 15px; }
.line-cell--dark, .dark { color: #000; }
.muted { color: #a0a0a0; }
.panel-note { height: 54px; border-top: 1px solid #c6c6c6; background: #eee; margin: 4px 1px 1px 0; }

.main { display: flex; flex-direction: column; flex: 1; min-width: 0; border-left: 6px solid #dcdcdc; }
.tabs { display: flex; align-items: flex-end; height: 22px; padding-top: 2px; font-size: 12px; overflow: hidden; flex: none; }
.tab { height: 20px; background: #f0f0f0; border-top: 1px solid #999; border-right: 1px solid #999; border-radius: 2px 3px 0 0; }
.tab span { line-height: 18px; }
.tab--first, .tab--active { background: none; border-top: 0; position: relative; }
.tab--first span, .tab--active span { flex: 1; height: 20px; line-height: 19px; background: #f0f0f0; border-top: 1px solid #999; }
.tab--first { width: 127px; }
.tab--first span { text-align: left; padding-left: 14px; }
.tab--xl { width: 152px; }
.tab--s { width: 82px; padding-left: 4px; }
.tab--m { width: 96px; padding-left: 4px; }
.tab--l { width: 124px; }
.tab--last { width: 111px; border-right: 0; }
.tab--active { width: 130px; margin-left: -15px; }
.tab--active span { background: #fff; font-weight: 700; color: #333; text-align: left; padding-left: 12px; }
.close { position: absolute; right: 5px; top: 6px; }
.canvas { flex: 1; min-height: 0; background: #000; overflow: hidden; }
.drawing { width: 100%; height: 100%; }
.cad { fill: #fff; stroke: none; font-family: "Noto Sans CJK SC", sans-serif; }
.cad--s { font-size: 8px; }
.cad--xs { font-size: 6px; }

.layouts { display: flex; height: 17px; flex: none; border-top: 1px solid #888; }
.pager { display: flex; align-items: center; gap: 8px; width: 65px; padding-left: 3px; }
.sheet-tab { position: relative; width: 55px; height: 16px; margin-left: -7px; }
.sheet-tab svg { position: absolute; left: 0; top: 0; }
.sheet-tab span { position: relative; line-height: 14px; }
.sheet-tab--active { width: 48px; margin-left: 0; font-weight: 700; }
.status { height: 24px; flex: none; border-top: 5px solid #cbcbcb; background: #e6e6e6; }
```
